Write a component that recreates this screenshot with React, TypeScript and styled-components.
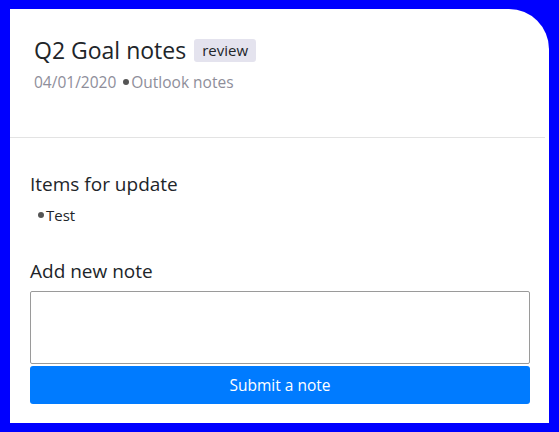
import React from "react";
import styled, { createGlobalStyle } from "styled-components";

const Global = createGlobalStyle`
  html, body { margin: 0; padding: 0; background: #0000ff; }
  body { font-family: "Open Sans", "Noto Sans", sans-serif; }
  * { box-sizing: border-box; }
`;

const Frame = styled.div`
  padding: 9px 10px 9px 10px;
  height: 432px;
`;

const Panel = styled.div`
  background: #ffffff;
  height: 414px;
  border-top-right-radius: 40px;
  display: flex;
  flex-direction: column;
`;

const Header = styled.header`
  padding: 26px 24px 0 24px;
  height: 129px;
  margin-right: 4px;
  border-bottom: 1px solid #e3e3e3;
`;

const TitleRow = styled.div`
  display: flex;
  align-items: center;
  gap: 8px;
`;

const Title = styled.h1`
  margin: 0;
  font-size: 23px;
  font-weight: 400;
  color: #212529;
  line-height: 30px;
`;

const Badge = styled.span`
  background: #e4e3ee;
  color: #212529;
  font-size: 15px;
  line-height: 23px;
  padding: 0 8px;
  border-radius: 3px;
`;

const Meta = styled.div`
  margin-top: 6px;
  color: #8e8e9a;
  font-size: 15.5px;
  line-height: 22px;
  display: flex;
  align-items: center;
`;

const Dot = styled.span`
  display: inline-block;
  width: 6px;
  height: 6px;
  border-radius: 50%;
  background: #555;
  margin: 0 2px 0 7px;
`;

const Body = styled.div`
  padding: 32px 19px 0 20px;
  display: flex;
  flex-direction: column;
`;

const SectionTitle = styled.h2`
  margin: 0;
  font-size: 19px;
  font-weight: 400;
  color: #212529;
  line-height: 28px;
`;

const List = styled.ul`
  list-style: none;
  margin: 5px 0 30px 0;
  padding: 0 0 0 8px;
`;

const Item = styled.li`
  font-size: 15px;
  line-height: 24px;
  color: #212529;
  display: flex;
  align-items: center;
`;

const ItemDot = styled.span`
  width: 6px;
  height: 6px;
  border-radius: 50%;
  background: #555;
  margin-right: 2px;
`;

const TextArea = styled.textarea`
  display: block;
  width: 100%;
  height: 73px;
  margin-top: 6px;
  border: 1px solid #9a9a9a;
  border-radius: 2px;
  resize: none;
  font-family: inherit;
`;

const Button = styled.button`
  margin-top: 2px;
  width: 100%;
  height: 38px;
  background: #007bff;
  color: #ffffff;
  border: none;
  border-radius: 3px;
  font-family: inherit;
  font-size: 15.5px;
`;

export default function App() {
  return (
    <>
      <Global />
      <Frame>
        <Panel>
          <Header>
            <TitleRow>
              <Title>Q2 Goal notes</Title>
              <Badge>review</Badge>
            </TitleRow>
            <Meta>
              04/01/2020 <Dot />Outlook notes
            </Meta>
          </Header>
          <Body>
            <SectionTitle>Items for update</SectionTitle>
            <List>
              <Item>
                <ItemDot />
                Test
              </Item>
            </List>
            <SectionTitle>Add new note</SectionTitle>
            <TextArea />
            <Button>Submit a note</Button>
          </Body>
        </Panel>
      </Frame>
    </>
  );
}
